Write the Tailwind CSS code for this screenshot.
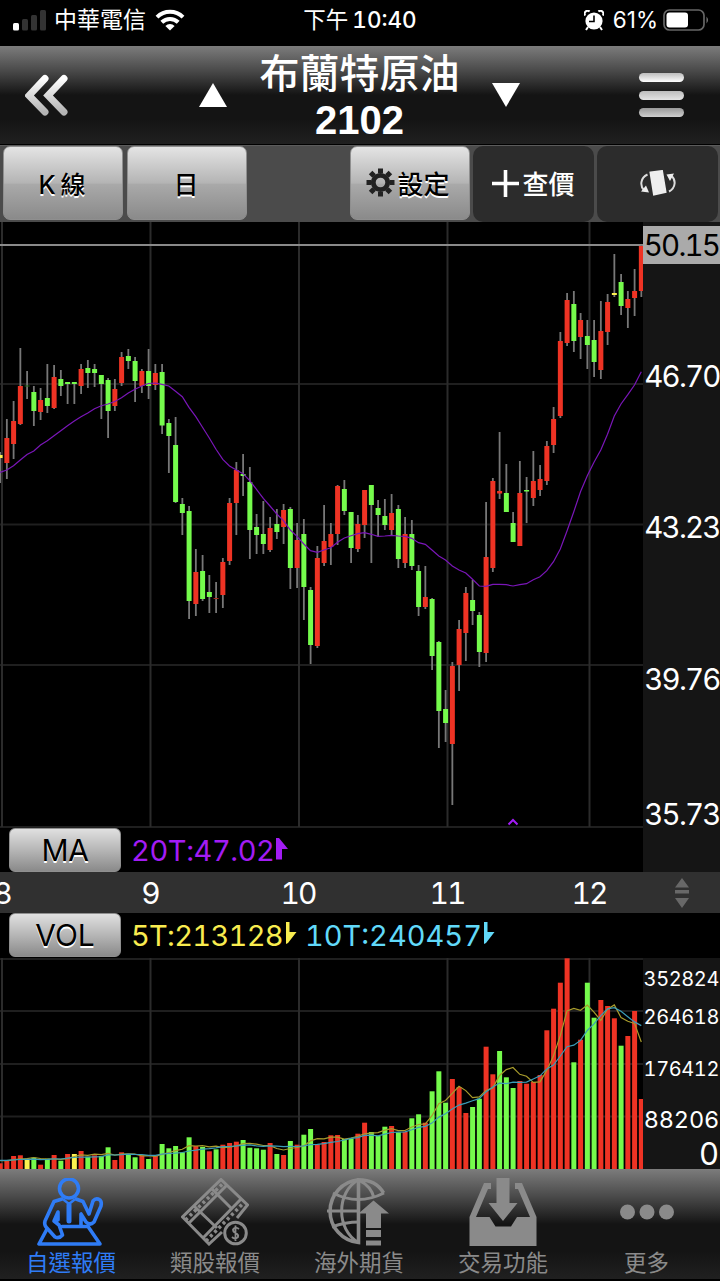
<!DOCTYPE html>
<html lang="zh-Hant">
<head>
  <meta charset="UTF-8" />
  <meta name="viewport" content="width=device-width, initial-scale=1.0" />
  <title>布蘭特原油 2102</title>
  <script src="https://cdn.jsdelivr.net/npm/@tailwindcss/browser@4"></script>
</head>
<body class="bg-black text-white w-[720px] h-[1281px] overflow-hidden flex flex-col tabular-nums font-['Inter','Noto_Sans_CJK_TC',sans-serif]">

  <!-- Status bar -->
  <div class="h-[46px] shrink-0 grid grid-cols-3 items-center pb-[6px]">
    <div class="flex items-center pl-[13px]">
      <svg width="33" height="21" viewBox="0 0 33 21">
        <rect x="0" y="13" width="6" height="7.5" rx="1.5" fill="#fff"/>
        <rect x="9" y="9" width="6" height="11.5" rx="1.5" fill="#333"/>
        <rect x="18" y="5" width="6" height="15.5" rx="1.5" fill="#333"/>
        <rect x="27" y="0" width="6" height="20.5" rx="1.5" fill="#333"/>
      </svg>
      <span class="ml-[8px] text-[23px] leading-none">中華電信</span>
      <svg class="ml-[9px]" width="30" height="22" viewBox="0 0 30 22" fill="none" stroke="#fff" stroke-width="4">
        <path d="M2 8.2a18.5 18.5 0 0 1 26 0"/>
        <path d="M6.8 13.2a11.8 11.8 0 0 1 16.4 0"/>
        <path d="M15 21.5l-4.6-4.6a6.5 6.5 0 0 1 9.2 0z" fill="#fff" stroke="none"/>
      </svg>
    </div>
    <div class="text-center text-[22.5px] leading-none whitespace-nowrap"><span>下午</span><span class="ml-[4px] font-medium">10:40</span></div>
    <div class="flex items-center justify-end pr-[10px]">
      <svg width="20" height="21" viewBox="0 0 20 21">
        <circle cx="10" cy="11" r="8.6" fill="#fff"/>
        <path d="M1.2 5.5A3 3 0 0 1 5.6 1.5M14.4 1.5A3 3 0 0 1 18.8 5.5M4 17l-2 3M16 17l2 3" stroke="#fff" stroke-width="2" fill="none"/>
        <path d="M10 5.5V11.5H5" stroke="#000" stroke-width="1.6" fill="none"/>
      </svg>
      <span class="ml-[9px] text-[22.5px] leading-none proportional-nums">61%</span>
      <svg class="ml-[5px]" width="47" height="22" viewBox="0 0 47 22">
        <rect x="1" y="1" width="40" height="20" rx="5.5" fill="none" stroke="#666" stroke-width="1.7"/>
        <rect x="3.5" y="3.5" width="21.5" height="15" rx="3" fill="#fff"/>
        <path d="M43.5 7.5q3 3.5 0 7z" fill="#777"/>
      </svg>
    </div>
  </div>

  <!-- Title bar -->
  <header class="h-[99px] shrink-0 flex items-center justify-between border-b border-black bg-linear-[180deg,#7c7c7c_0%,#4a4a4a_25%,#141414_50%,#141414_75%,#202020_100%]">
    <svg class="ml-[25px]" width="44" height="42" viewBox="0 0 44 42" fill="none" stroke="url(#chev)" stroke-width="7" stroke-linecap="round">
      <defs><linearGradient id="chev" x1="0" y1="0" x2="0" y2="1"><stop offset="0" stop-color="#fff"/><stop offset="1" stop-color="#b4b4b4"/></linearGradient></defs>
      <path d="M20 4.5L4 21.5L20 38"/>
      <path d="M39 4.5L23 21.5L39 38"/>
    </svg>
    <div class="flex items-center justify-center ml-[11px]">
      <svg width="28" height="24" viewBox="0 0 28 24"><path d="M14 0L28 24H0z" fill="#fff"/></svg>
      <h1 class="w-[265px] text-center">
        <span class="block h-[49px] leading-[53px] text-[40px] font-medium">布蘭特原油</span>
        <span class="block h-[48px] leading-[49px] text-[40px] font-bold font-['Liberation_Sans',sans-serif]">2102</span>
      </h1>
      <svg width="28" height="24" viewBox="0 0 28 24"><path d="M0 0H28L14 24z" fill="#fff"/></svg>
    </div>
    <div class="w-[45px] mr-[36px] flex flex-col gap-[8.5px]">
      <div class="h-[9px] rounded-full bg-linear-to-b from-[#bdbdbd] to-white"></div>
      <div class="h-[9px] rounded-full bg-linear-to-b from-[#bdbdbd] to-[#e4e4e4]"></div>
      <div class="h-[9px] rounded-full bg-linear-to-b from-[#999] to-[#cfcfcf]"></div>
    </div>
  </header>

  <!-- Toolbar -->
  <div class="h-[77px] shrink-0 bg-[#4b4b4b] border-t border-[#5c5c5c] flex pl-[3px] text-[25px] leading-none text-black">
    <button class="w-[120px] h-[74px] pt-[4px] pr-[2px] rounded-[7px] border border-[#8f8f8f] bg-linear-[180deg,#e4e4e4_0%,#b4b4b4_50%,#a9a9a9_52%,#8a8a8a_100%] font-medium [text-shadow:0_2px_0_#fff]"><span class="mr-[5px]">K</span>線</button>
    <button class="ml-[4px] w-[120px] h-[74px] pt-[4px] pr-[2px] rounded-[7px] border border-[#8f8f8f] bg-linear-[180deg,#e4e4e4_0%,#b4b4b4_50%,#a9a9a9_52%,#8a8a8a_100%] font-medium [text-shadow:0_2px_0_#fff]">日</button>
    <button class="ml-[103px] w-[120px] h-[74px] pr-[4px] rounded-[7px] border border-[#8f8f8f] bg-linear-[180deg,#e4e4e4_0%,#b4b4b4_50%,#a9a9a9_52%,#8a8a8a_100%] font-medium flex items-center justify-center [text-shadow:0_2px_0_#fff]">
      <svg class="mb-[2px] mr-[2px]" width="29" height="29" viewBox="-14.5 -14.5 29 29" fill="none" stroke="#222">
        <circle r="7.2" stroke-width="4.8"/>
        <path d="M0-9V-14M0 9V14M-9 0H-14M9 0H14M-6.4-6.4L-9.9-9.9M6.4 6.4L9.9 9.9M-6.4 6.4L-9.9 9.9M6.4-6.4L9.9-9.9" stroke-width="5"/>
      </svg>
      <span class="text-[26px] pt-[3px]">設定</span>
    </button>
    <button class="ml-[3px] w-[121px] h-[76px] rounded-[10px] bg-[#2c2c2c] text-white text-[26px] font-medium flex items-center justify-center">
      <svg class="mb-[2px] mr-[3px]" width="27" height="27" viewBox="0 0 27 27"><path d="M13.5 0V27M0 13.5H27" stroke="#fff" stroke-width="3.6"/></svg>
      <span class="pt-[2px]">查價</span>
    </button>
    <button class="ml-[3px] w-[121px] h-[76px] rounded-[10px] bg-[#2c2c2c] flex items-center justify-center pb-[3px]">
      <svg width="36" height="26" viewBox="0 0 36 26" fill="none" stroke="#ddd" stroke-width="2">
        <path d="M10.500 2.5L22 1L25.500 22L14 24.500z" fill="#eee" stroke="#eee"/>
        <path d="M7.500 4.500C0 8 0 16 4 20"/><path d="M9 22.500L1 21.500L6 15.500z" fill="#eee" stroke="none"/>
        <path d="M29 21.500C36 18 36 9.500 31.500 6"/><path d="M26.500 4.500L34 3.500L30 11z" fill="#eee" stroke="none"/>
      </svg>
    </button>
  </div>

  <!-- Price chart -->
  <section class="h-[606px] shrink-0 flex">
    <svg id="price" width="643" height="606" viewBox="0 222 643 606" class="shrink-0"></svg>
    <div class="w-[77px] pl-[1px] bg-[#151515] pt-[4px] flex flex-col text-[29.5px] leading-none tracking-[-1.8px] whitespace-nowrap">
      <div class="-ml-[1px] h-[38px] bg-[#aaa] text-black flex items-center justify-center pt-[2px]">50.15</div>
      <div class="h-[224px] flex items-center justify-center pt-[2px]">46.70</div>
      <div class="h-[78px] flex items-center justify-center pt-[2px]">43.23</div>
      <div class="h-[226px] flex items-center justify-center pt-[2px]">39.76</div>
      <div class="h-[36px] flex items-center justify-center pt-[10px]">35.73</div>
    </div>
  </section>

  <!-- MA row -->
  <div class="h-[44px] shrink-0 flex">
    <div class="w-[643px] flex items-center pl-[9px]">
      <button class="w-[112px] h-[44px] rounded-[6px] border border-[#8f8f8f] bg-linear-[180deg,#e0e0e0_0%,#b6b6b6_50%,#8a8a8a_100%] text-black text-[30px] leading-none tracking-[-0.5px] [text-shadow:0_2px_0_#fff]">MA</button>
      <span class="w-[145px] ml-[10px] text-[29px] leading-none tracking-[-0.4px] text-[#a31cf5]">20T:47.02</span>
      <svg class="mb-[3px]" width="12" height="22" viewBox="0 0 12 22"><path d="M0 0H3L12 11H6V21.5H0z" fill="#a31cf5"/></svg>
    </div>
    <div class="w-[77px] bg-[#151515]"></div>
  </div>

  <!-- Month row -->
  <div class="h-[41px] shrink-0 bg-[#303030] flex items-center text-[30px] leading-none tracking-[-2px]">
    <span class="w-[76px] -ml-[36px] text-center">8</span>
    <span class="w-[220px] text-center">9</span>
    <span class="w-[76px] text-center">10</span>
    <span class="w-[222px] text-center">11</span>
    <span class="w-[62px] text-center">12</span>
    <svg class="ml-[55px]" width="14" height="30" viewBox="0 0 14 30" fill="#686868"><path d="M7 0L14 9.5H0zM0 12h14v3.5H0zM0 20H14L7 30z"/></svg>
  </div>

  <!-- VOL row -->
  <div class="h-[45px] shrink-0 flex items-center pl-[9px] text-[29px] leading-none">
    <button class="w-[112px] h-[44px] mb-[2px] rounded-[6px] border border-[#8f8f8f] bg-linear-[180deg,#e0e0e0_0%,#b6b6b6_50%,#8a8a8a_100%] text-black text-[30px] leading-none [text-shadow:0_2px_0_#fff]">VOL</button>
    <span class="w-[154px] ml-[10px] tracking-[-0.7px] text-[#f9ec4f]">5T:213128</span>
    <svg class="mb-[5px]" width="12" height="22" viewBox="0 0 12 22"><path d="M1 0H4.5V10H11.5L3 21L1 22z" fill="#f9ec4f"/></svg>
    <span class="w-[179px] ml-[8px] text-[#61d9f9]">10T:240457</span>
    <svg class="mb-[5px]" width="12" height="22" viewBox="0 0 12 22"><path d="M0 0H3.5V10H10.5L2 21L0 22z" fill="#61d9f9"/></svg>
  </div>

  <!-- Volume chart -->
  <section class="h-[211px] shrink-0 flex">
    <svg id="volume" width="643" height="211" viewBox="0 958 643 211" class="shrink-0"></svg>
    <div class="w-[77px] pr-[1px] bg-[#151515] flex flex-col items-end leading-none whitespace-nowrap">
      <div class="h-[40px] flex items-center pt-[2px] text-[20px] tracking-[-0.4px]">352824</div>
      <div class="h-[36px] flex items-center pt-[2px] text-[20px] tracking-[-0.4px]">264618</div>
      <div class="h-[68px] flex items-center pt-[2px] text-[20px] tracking-[-0.4px]">176412</div>
      <div class="h-[36px] flex items-center text-[23.5px] tracking-[-0.2px]">88206</div>
      <div class="h-[31px] flex items-center text-[31px]">0</div>
    </div>
  </section>

  <!-- Tab bar -->
  <nav class="h-[112px] shrink-0 grid grid-cols-5 justify-items-center border-b-2 border-black bg-linear-[180deg,#7c7c7c_0%,#4a4a4a_25%,#141414_50%,#141414_75%,#202020_100%] text-[22.5px] leading-none text-[#8a8a8a]">
    <a class="flex flex-col items-center pt-[9px] pr-[2px] text-[#2f7cf6]">
      <svg width="68" height="68" viewBox="0 0 68 68" fill="none" stroke="currentColor" stroke-width="3.6" stroke-linejoin="round" stroke-linecap="round">
        <ellipse cx="32" cy="10.5" rx="9.5" ry="9.5"/>
        <path d="M25 21L17 23.5L8 43Q7 46 9 49L18 59Q22 61 25.500 57L22 47L17 43L21 34V42"/>
        <path d="M39 21L46 23.5L52 36L56 23Q59 19.500 63 22Q65 24 64 28L57 44Q53 48 49 44L44 36V47"/>
        <path d="M27 22L32 26L37 22" stroke-width="2.4"/>
        <path d="M32 27V43" stroke-width="5"/>
        <path d="M10 51L2 66H63L51 48.500H25"/>
      </svg>
      <span class="mt-[6px]">自選報價</span>
    </a>
    <a class="flex flex-col items-center pt-[9px] pr-[2px]">
      <svg width="68" height="68" viewBox="0 0 68 68" fill="none" stroke="currentColor" stroke-width="3">
        <path d="M41 54L28 66L1.500 39L40 1.500L66.500 27L56 40M8 45L46 7M22 60L60 21"/>
        <path d="M31 11L50 30M13 28L36 50"/>
        <path d="M4.500 42L43 4.500M25 63L63 24.500" stroke-dasharray="3 3" stroke-width="3.500"/>
        <circle cx="54.500" cy="55" r="10.800"/>
        <path d="M58 51Q54 48 52 51.500Q52 54 54.500 55Q58 56.500 57 59Q54 62 51 59M54.500 47.500V63" stroke-width="1.800"/>
      </svg>
      <span class="mt-[6px]">類股報價</span>
    </a>
    <a class="flex flex-col items-center pt-[9px] pr-[2px]">
      <svg width="68" height="68" viewBox="0 0 68 68" fill="none" stroke="currentColor" stroke-width="3.6">
        <path d="M33.500 1.800A31.500 31.500 0 0 0 33.500 64.500V1.800C45 1.800 54 7 58.500 15"/>
        <path d="M33.500 1.800C11 14 11 52 33.500 64.500M33.500 1.800C42 6 47.500 13 49 20M8 15Q33 28 59 15M2 33H34M7 49Q20 44 34 44" stroke-width="3"/>
        <path d="M48.500 22.500L64 35.500H56V50H41V35.500H33.500zM41 52H56V59H41zM41 62.500H56V67.500H41z" fill="currentColor" stroke="none"/>
      </svg>
      <span class="mt-[6px]">海外期貨</span>
    </a>
    <a class="flex flex-col items-center pt-[9px] pr-[2px]">
      <svg width="68" height="68" viewBox="0 0 68 68" fill="currentColor">
        <path d="M15 5H22V11H19L7 39H20.500L26.500 48.500H42L48 39H61L49 11H46V5H53L67.500 39V68H.5V39z"/>
        <path d="M27.500 0H40.500V25H48.500L34 43L19.500 25H27.500z"/>
      </svg>
      <span class="mt-[6px]">交易功能</span>
    </a>
    <a class="flex flex-col items-center pt-[9px] pr-[3px]">
      <svg width="68" height="68" viewBox="0 0 68 68" fill="currentColor"><circle cx="14.500" cy="34" r="7.500"/><circle cx="34" cy="34" r="7.500"/><circle cx="53.500" cy="34" r="7.500"/></svg>
      <span class="mt-[6px]">更多</span>
    </a>
  </nav>

  <script>
    // [color, high, body top, body bottom, low, volume top]
    const bars = [
      ['y',452,455,458,483,1163.3],['r',419,438,463,479,1160],['r',401,421,444,459,1156],['r',348,386,424,425,1155.3],['d',371,385.5,386.5,399,1158.7],
      ['g',386,392,411,426,1157.7],['r',388,400,412,420,1164.7],['g',364,398,406,413,1158.7],['r',365,377,408,409,1155],['g',370,379,386,396,1160.7],
      ['g',382,382,384,404,1154],['g',382,382,384,404,1154],['r',364,369,386,394,1151],['g',360,368,373,388,1156.7],['g',364,369,373,387,1155.3],
      ['g',375,375,384,419,1156],['g',378,380,411,438,1147.3],['r',379,389,406,411,1160],['r',352,357,383,386,1152.3],['g',349,356,361,369,1154],
      ['g',357,361,381,402,1157.3],['r',369,371,386,393,1155.3],['g',349,371,386,399,1159],['r',364,373,385,390,1156],['g',364,372,425.5,434,1144],
      ['g',419,423,436,473,1148.3],['g',417,445,502,503,1146],['g',498,504,513,535,1152.3],['g',506,511,601,619,1137.3],['r',549,572,604,616,1146],
      ['g',555,571,599,601,1147],['g',575,592,597,613,1151.3],['e',582,598,599,613,1149.3],['r',558,562,595,608,1144.7],['r',498,503,561,565,1143],
      ['r',462,470,503,535,1141.7],['g',454,474,476,496,1140],['g',467,482,530,559,1147.7],['g',514,527,535,554,1148.3],['g',501,534,544,554,1149.7],
      ['r',517,528,550,552,1143],['g',509,524,532,539,1154],['r',504,510,527,544,1155],['g',507,509,568,589,1141],['r',523,540,568,588,1144.7],
      ['g',519,534,587,620,1134.7],['g',587,590,645,664,1129],['r',546,558,646,648,1144.3],['r',505,541,563,566,1142],['r',523,534,547,565,1135.3],
      ['r',485,486,534,545,1135],['g',480,489,511,515,1139],['g',512,512,548,563,1138.5],['r',515,524,549,552,1133.7],['r',490,490,525,538,1122.7],
      ['g',485,485,505,563,1132],['g',500,508,515,537,1136],['g',499,516,525,530,1126.7],['r',494,513,530,536,1126],['g',505,509,559,568,1132.3],
      ['r',517,534,563,568,1131.7],['g',520,534,566,570,1118.3],['g',565,571,607,616,1114.3],['r',566,597,607,609,1122.7],['g',598,599,656,670,1091.3],
      ['g',641,642,711,748,1071.3],['g',690,709,723,742,1102.7],['r',662,666,744,805,1079],['r',620,629,665,691,1087],['r',587,593,633,661,1113],
      ['g',580,600,611,625,1107],['g',612,615,652,667,1098.7],['r',502,557,653,662,1046.7],['r',478,481,568,572,1074.3],['r',432,491,493.5,499,1051],
      ['g',464,493,512,512,1077.3],['g',512,523,542,542,1088],['r',461,493,546,546,1081],['g',477,490,491.5,523,1083.7],['r',451,481,498,506,1082],
      ['r',465,479,490,496,1075],['r',441,446,481,485,1030.3],['r',407,419,445,453,1008.7],['r',332,341,416,418,982.7],['r',293,300,343,346,958.3],
      ['g',291,304,341,352,1062.3],['r',313,320,337,359,1039.7],['g',320,336,345,369,982.7],['g',320,340,362,377,1017.7],['r',301,331,370,379,1000],
      ['r',294,302,332,345,1006],['y',254,293,295,297,1018.3],['g',274,282,306,315,1045.7],['r',291,299,308,328,1036],['r',269,291,298,316,1011],
      ['r',245,246,291,297,1099]
    ];
    const ma20 = [472.5,470,465.7,460,454.5,451,445,440.7,435.7,430.7,425.7,421,416.7,413,408.7,405.7,404,401.5,397.7,393,389.3,386,383.5,383,384.3,386,391.3,396.7,407.3,416.7,427.3,438,449.3,459.3,466,470,473.7,480.7,489.3,498.3,506,514,520.7,530,536.3,544,550.7,552.3,550,547.7,542.3,538,535.7,533.7,532.7,534.3,536.3,536,535.3,536,536.3,538.3,542.7,544.3,550,556,560,566,570,573,579.3,586,586.3,584.3,584.3,584.7,586,584.7,583.7,579.7,576.7,570.7,561.7,549,531,511.7,491.7,475.7,462.3,450,434.3,416,404,394.7,385,371.7];

    const colors = { r: '#ee3324', g: '#75fb4c', y: '#fdf14f', d: '#1e6b1a', e: '#a52a1e' };
    // volume bars that differ from the candle color
    const volColor = { 0: 'r', 4: 'y', 10: 'r', 11: 'y', 14: 'r', 31: 'r', 32: 'g', 74: 'g', 78: 'r', 91: 'r' };
    const step = 6.75;

    const rect = (x, y, w, h, fill) => `<rect x="${x}" y="${y}" width="${w}" height="${h}" fill="${fill}"/>`;
    const line = (ys, color, width) => `<polyline points="${ys.map((y, i) => (i * step).toFixed(1) + ',' + y.toFixed(1)).join(' ')}" fill="none" stroke="${color}" stroke-width="${width}"/>`;

    function grid(rows, top, bottom) {
      return rows.map(y => rect(0, y - 1, 643, 2, '#1f1f1f')).join('') +
        [2, 150.5, 299, 447.5, 589.5].map(x => rect(x - 1, top, 2, bottom - top, '#2b2b2b')).join('');
    }

    function average(n) {
      return bars.map((_, i) => {
        let sum = 0;
        for (let k = i - n + 1; k <= i; k++) sum += k < 0 ? 1160 : bars[k][5];
        return sum / n;
      });
    }

    let price = grid([384, 524.5, 665, 827], 222, 827) + rect(0, 244, 643, 2, '#8a8a8a');
    let volume = grid([959, 1011, 1064, 1116.5], 958, 1169);
    bars.forEach(([c, high, top, bottom, low, vol], i) => {
      const x = i * step;
      price += rect(x - 0.8, high, 1.8, low - high, '#777');
      price += rect(x - 2.4, top, 5, bottom - top, colors[c]);
      volume += rect(x - 2.4, vol, 5, 1169 - vol, colors[volColor[i] || c]);
    });
    price += line(ma20, '#7a16b8', 1.2);
    price += '<path d="M508.500 824.500L513 820L517.500 824.500" fill="none" stroke="#a31cf5" stroke-width="2"/>';
    volume += line(average(5), '#a89c2c', 1.2) + line(average(10), '#3b9db8', 1.2);
    document.getElementById('price').innerHTML = price;
    document.getElementById('volume').innerHTML = volume;
  </script>
</body>
</html>
